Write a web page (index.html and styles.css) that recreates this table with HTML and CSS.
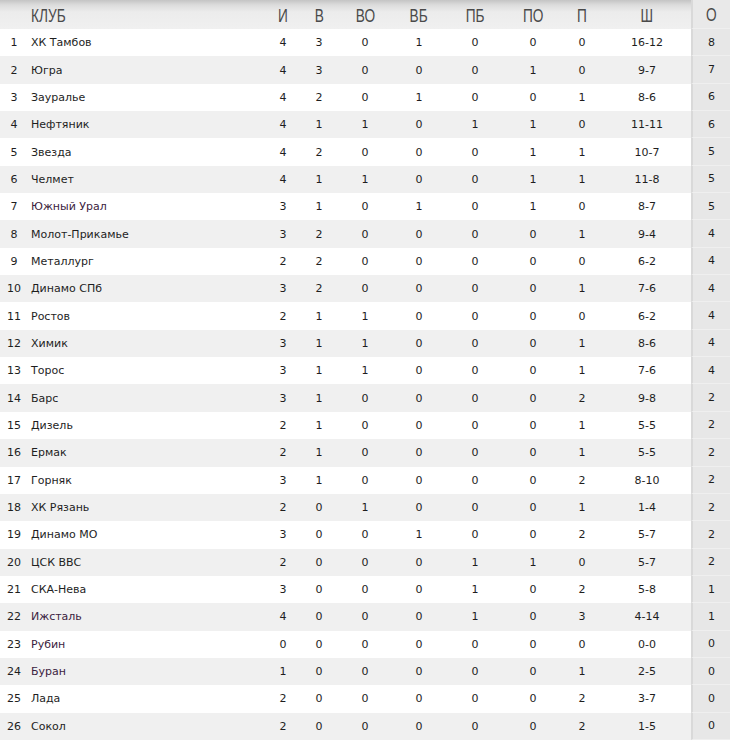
FILE: index.html
```html
<!DOCTYPE html>
<html lang="ru">
<head>
<meta charset="utf-8">
<title>Таблица</title>
<link rel="stylesheet" href="styles.css">
</head>
<body>
<div class="table">
  <div class="row head">
    <div class="c num"></div><div class="c club"><span class="ht">КЛУБ</span></div><div class="c i"><span class="ht">И</span></div><div class="c v"><span class="ht">В</span></div><div class="c vo"><span class="ht">ВО</span></div><div class="c vb"><span class="ht">ВБ</span></div><div class="c pb"><span class="ht">ПБ</span></div><div class="c po"><span class="ht">ПО</span></div><div class="c p"><span class="ht">П</span></div><div class="c sh"><span class="ht">Ш</span></div><div class="c o"><span class="ht">О</span></div>
  </div>
  <div class="row"><div class="c num">1</div><div class="c club">ХК Тамбов</div><div class="c i">4</div><div class="c v">3</div><div class="c vo">0</div><div class="c vb">1</div><div class="c pb">0</div><div class="c po">0</div><div class="c p">0</div><div class="c sh">16-12</div><div class="c o">8</div></div>
  <div class="row"><div class="c num">2</div><div class="c club">Югра</div><div class="c i">4</div><div class="c v">3</div><div class="c vo">0</div><div class="c vb">0</div><div class="c pb">0</div><div class="c po">1</div><div class="c p">0</div><div class="c sh">9-7</div><div class="c o">7</div></div>
  <div class="row"><div class="c num">3</div><div class="c club">Зауралье</div><div class="c i">4</div><div class="c v">2</div><div class="c vo">0</div><div class="c vb">1</div><div class="c pb">0</div><div class="c po">0</div><div class="c p">1</div><div class="c sh">8-6</div><div class="c o">6</div></div>
  <div class="row"><div class="c num">4</div><div class="c club">Нефтяник</div><div class="c i">4</div><div class="c v">1</div><div class="c vo">1</div><div class="c vb">0</div><div class="c pb">1</div><div class="c po">1</div><div class="c p">0</div><div class="c sh">11-11</div><div class="c o">6</div></div>
  <div class="row"><div class="c num">5</div><div class="c club">Звезда</div><div class="c i">4</div><div class="c v">2</div><div class="c vo">0</div><div class="c vb">0</div><div class="c pb">0</div><div class="c po">1</div><div class="c p">1</div><div class="c sh">10-7</div><div class="c o">5</div></div>
  <div class="row"><div class="c num">6</div><div class="c club">Челмет</div><div class="c i">4</div><div class="c v">1</div><div class="c vo">1</div><div class="c vb">0</div><div class="c pb">0</div><div class="c po">1</div><div class="c p">1</div><div class="c sh">11-8</div><div class="c o">5</div></div>
  <div class="row"><div class="c num">7</div><div class="c club visited">Южный Урал</div><div class="c i">3</div><div class="c v">1</div><div class="c vo">0</div><div class="c vb">1</div><div class="c pb">0</div><div class="c po">1</div><div class="c p">0</div><div class="c sh">8-7</div><div class="c o">5</div></div>
  <div class="row"><div class="c num">8</div><div class="c club">Молот-Прикамье</div><div class="c i">3</div><div class="c v">2</div><div class="c vo">0</div><div class="c vb">0</div><div class="c pb">0</div><div class="c po">0</div><div class="c p">1</div><div class="c sh">9-4</div><div class="c o">4</div></div>
  <div class="row"><div class="c num">9</div><div class="c club">Металлург</div><div class="c i">2</div><div class="c v">2</div><div class="c vo">0</div><div class="c vb">0</div><div class="c pb">0</div><div class="c po">0</div><div class="c p">0</div><div class="c sh">6-2</div><div class="c o">4</div></div>
  <div class="row"><div class="c num">10</div><div class="c club">Динамо СПб</div><div class="c i">3</div><div class="c v">2</div><div class="c vo">0</div><div class="c vb">0</div><div class="c pb">0</div><div class="c po">0</div><div class="c p">1</div><div class="c sh">7-6</div><div class="c o">4</div></div>
  <div class="row"><div class="c num">11</div><div class="c club">Ростов</div><div class="c i">2</div><div class="c v">1</div><div class="c vo">1</div><div class="c vb">0</div><div class="c pb">0</div><div class="c po">0</div><div class="c p">0</div><div class="c sh">6-2</div><div class="c o">4</div></div>
  <div class="row"><div class="c num">12</div><div class="c club">Химик</div><div class="c i">3</div><div class="c v">1</div><div class="c vo">1</div><div class="c vb">0</div><div class="c pb">0</div><div class="c po">0</div><div class="c p">1</div><div class="c sh">8-6</div><div class="c o">4</div></div>
  <div class="row"><div class="c num">13</div><div class="c club">Торос</div><div class="c i">3</div><div class="c v">1</div><div class="c vo">1</div><div class="c vb">0</div><div class="c pb">0</div><div class="c po">0</div><div class="c p">1</div><div class="c sh">7-6</div><div class="c o">4</div></div>
  <div class="row"><div class="c num">14</div><div class="c club">Барс</div><div class="c i">3</div><div class="c v">1</div><div class="c vo">0</div><div class="c vb">0</div><div class="c pb">0</div><div class="c po">0</div><div class="c p">2</div><div class="c sh">9-8</div><div class="c o">2</div></div>
  <div class="row"><div class="c num">15</div><div class="c club">Дизель</div><div class="c i">2</div><div class="c v">1</div><div class="c vo">0</div><div class="c vb">0</div><div class="c pb">0</div><div class="c po">0</div><div class="c p">1</div><div class="c sh">5-5</div><div class="c o">2</div></div>
  <div class="row"><div class="c num">16</div><div class="c club">Ермак</div><div class="c i">2</div><div class="c v">1</div><div class="c vo">0</div><div class="c vb">0</div><div class="c pb">0</div><div class="c po">0</div><div class="c p">1</div><div class="c sh">5-5</div><div class="c o">2</div></div>
  <div class="row"><div class="c num">17</div><div class="c club">Горняк</div><div class="c i">3</div><div class="c v">1</div><div class="c vo">0</div><div class="c vb">0</div><div class="c pb">0</div><div class="c po">0</div><div class="c p">2</div><div class="c sh">8-10</div><div class="c o">2</div></div>
  <div class="row"><div class="c num">18</div><div class="c club">ХК Рязань</div><div class="c i">2</div><div class="c v">0</div><div class="c vo">1</div><div class="c vb">0</div><div class="c pb">0</div><div class="c po">0</div><div class="c p">1</div><div class="c sh">1-4</div><div class="c o">2</div></div>
  <div class="row"><div class="c num">19</div><div class="c club">Динамо МО</div><div class="c i">3</div><div class="c v">0</div><div class="c vo">0</div><div class="c vb">1</div><div class="c pb">0</div><div class="c po">0</div><div class="c p">2</div><div class="c sh">5-7</div><div class="c o">2</div></div>
  <div class="row"><div class="c num">20</div><div class="c club">ЦСК ВВС</div><div class="c i">2</div><div class="c v">0</div><div class="c vo">0</div><div class="c vb">0</div><div class="c pb">1</div><div class="c po">1</div><div class="c p">0</div><div class="c sh">5-7</div><div class="c o">2</div></div>
  <div class="row"><div class="c num">21</div><div class="c club">СКА-Нева</div><div class="c i">3</div><div class="c v">0</div><div class="c vo">0</div><div class="c vb">0</div><div class="c pb">1</div><div class="c po">0</div><div class="c p">2</div><div class="c sh">5-8</div><div class="c o">1</div></div>
  <div class="row"><div class="c num">22</div><div class="c club visited">Ижсталь</div><div class="c i">4</div><div class="c v">0</div><div class="c vo">0</div><div class="c vb">0</div><div class="c pb">1</div><div class="c po">0</div><div class="c p">3</div><div class="c sh">4-14</div><div class="c o">1</div></div>
  <div class="row"><div class="c num">23</div><div class="c club visited">Рубин</div><div class="c i">0</div><div class="c v">0</div><div class="c vo">0</div><div class="c vb">0</div><div class="c pb">0</div><div class="c po">0</div><div class="c p">0</div><div class="c sh">0-0</div><div class="c o">0</div></div>
  <div class="row"><div class="c num">24</div><div class="c club visited">Буран</div><div class="c i">1</div><div class="c v">0</div><div class="c vo">0</div><div class="c vb">0</div><div class="c pb">0</div><div class="c po">0</div><div class="c p">1</div><div class="c sh">2-5</div><div class="c o">0</div></div>
  <div class="row"><div class="c num">25</div><div class="c club">Лада</div><div class="c i">2</div><div class="c v">0</div><div class="c vo">0</div><div class="c vb">0</div><div class="c pb">0</div><div class="c po">0</div><div class="c p">2</div><div class="c sh">3-7</div><div class="c o">0</div></div>
  <div class="row"><div class="c num">26</div><div class="c club">Сокол</div><div class="c i">2</div><div class="c v">0</div><div class="c vo">0</div><div class="c vb">0</div><div class="c pb">0</div><div class="c po">0</div><div class="c p">2</div><div class="c sh">1-5</div><div class="c o">0</div></div>
</div>
</body>
</html>
```
FILE: styles.css
```css
html, body {
  margin: 0;
  padding: 0;
  background: #ffffff;
}
body {
  width: 730px;
  height: 741px;
  overflow: hidden;
  font-family: "DejaVu Sans", Tahoma, sans-serif;
  font-size: 11px;
  color: #1e1e1e;
}
.table {
  display: flex;
  flex-direction: column;
}
.row {
  display: grid;
  grid-template-columns: 28px 237px 36px 36px 56px 52px 60px 56px 42px 88px 39px;
  height: 27.35px;
  align-items: center;
}
.row:nth-child(odd) {
  background: #f0f0f0;
}
.row:nth-child(even) {
  background: #ffffff;
}
.row.head {
  height: 29px;
  background: linear-gradient(to bottom, #c4c4c4 0px, #dcdcdc 5px, #ececec 12px, #f0f0f0 29px);
  font-family: "Liberation Sans", "DejaVu Sans", sans-serif;
  font-size: 19px;
  color: #4a4a4a;
}
.ht {
  display: inline-block;
  transform: scaleX(0.72);
}
.head .club .ht {
  transform-origin: left center;
}
.c {
  text-align: center;
  height: 100%;
  display: flex;
  align-items: center;
  justify-content: center;
  white-space: nowrap;
}
.c.club {
  justify-content: flex-start;
  padding-left: 3px;
}
.head .c {
  padding-top: 2px;
  box-sizing: border-box;
}
.c.o {
  background: #e7e7e7;
  border-left: 2px solid #d9d9d9;
  box-sizing: border-box;
  border-bottom: 1px solid #efefef;
}
.head .c.o {
  background: #e9e9e9;
}
.club.visited {
  color: #3b2340;
}
```
